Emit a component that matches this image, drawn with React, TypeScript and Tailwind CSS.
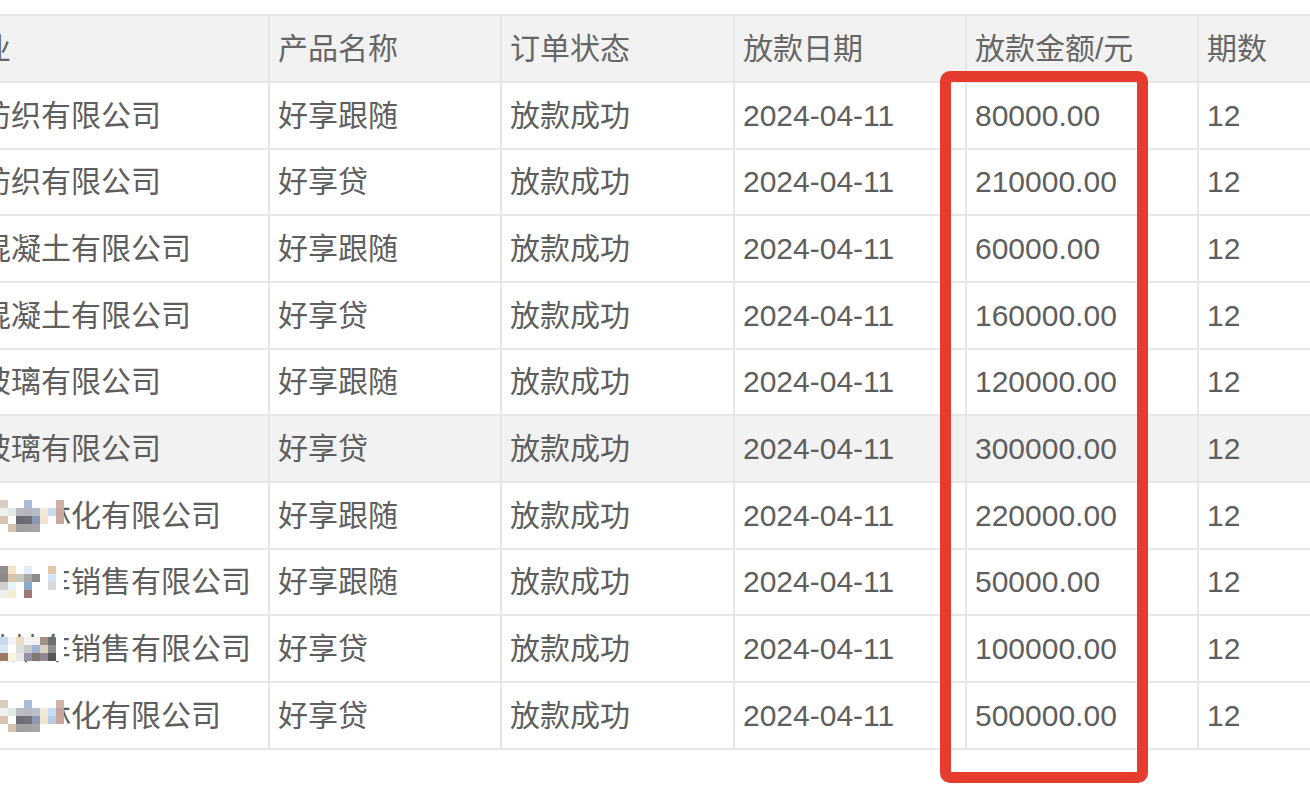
import React from "react";

type Row = { name: string; product: string; amount: string; mosaic?: string[][]; hover?: boolean };

const M7: string[][] = [
  ["#d8cfc4", "#ffffff", "#ffffff", "#a9bbd6", "#ffffff", "#ffffff", "#ffffff", "#d0b0a8"],
  ["#eef2ee", "#e2ebe6", "#b8b8c0", "#b4b4bc", "#b8bcc8", "#f2ead8", "#c8dcf4", "#c8a898"],
  ["#d8c4b0", "#ffffff", "#68686e", "#6c6c74", "#8898b0", "#f0e4d0", "#ffffff", "#c8a8a0"],
  ["#ffffff", "#d4c4b0", "#a0a0a4", "#a2a2a6", "#a4a4a8", "#ffffff", "#ffffff", "#ffffff"],
];
const M8: string[][] = [
  ["#909090", "#f0e4c4", "#ffffff", "#e0ecf8", "#ffffff", "#ffffff", "#e0c8a8", "#ffffff"],
  ["#8a8a8a", "#d8c4a8", "#c8c8c0", "#a8a8a8", "#8c8c8c", "#ffffff", "#d0e4f8", "#ffffff"],
  ["#d0d0d0", "#e8f4fc", "#ffffff", "#88a8d0", "#ffffff", "#ffffff", "#d8d8d8", "#ffffff"],
  ["#eeeeee", "#f4ecd0", "#ffffff", "#a07878", "#ffffff", "#ffffff", "#ffffff", "#ffffff"],
];
const M9: string[][] = [
  ["#c8d8f0", "#f4f4f4", "#e8dcc8", "#f4f4f4", "#f0f0f0", "#a09088", "#707070", "#ffffff"],
  ["#d8e4f0", "#ffffff", "#d8e0d8", "#c8c8c8", "#a0b4d0", "#d8d0c0", "#909090", "#ffffff"],
  ["#a07868", "#f8f4e0", "#e8e8e8", "#9890a8", "#80786c", "#908890", "#585858", "#ffffff"],
];
const M10: string[][] = [
  ["#d6ccc0", "#ffffff", "#ffffff", "#a8bcd8", "#ffffff", "#ffffff", "#ffffff", "#d0b4ac"],
  ["#eef2ee", "#e0eae4", "#bcbcc4", "#b8b8c0", "#bcc0cc", "#f2ead8", "#c8dcf4", "#c4a49c"],
  ["#d8c4b0", "#ffffff", "#6c6c72", "#707078", "#8a9ab0", "#f0e4d0", "#b8cce4", "#c8a8a0"],
  ["#ffffff", "#d4c4b0", "#a0a0a4", "#a2a2a6", "#a6a6aa", "#ffffff", "#ffffff", "#ffffff"],
];

const rows: Row[] = [
  { name: "某某纺织有限公司", product: "好享跟随", amount: "80000.00" },
  { name: "某某纺织有限公司", product: "好享贷", amount: "210000.00" },
  { name: "某某混凝土有限公司", product: "好享跟随", amount: "60000.00" },
  { name: "某某混凝土有限公司", product: "好享贷", amount: "160000.00" },
  { name: "某某玻璃有限公司", product: "好享跟随", amount: "120000.00" },
  { name: "某某玻璃有限公司", product: "好享贷", amount: "300000.00", hover: true },
  { name: "某某某某林化有限公司", product: "好享跟随", amount: "220000.00", mosaic: M7 },
  { name: "某某某某车销售有限公司", product: "好享跟随", amount: "50000.00", mosaic: M8 },
  { name: "某某某某车销售有限公司", product: "好享贷", amount: "100000.00", mosaic: M9 },
  { name: "某某某某林化有限公司", product: "好享贷", amount: "500000.00", mosaic: M10 },
];

const heights = ["h-[67px]", "h-[66px]", "h-[67px]", "h-[67px]", "h-[66px]", "h-[67px]", "h-[67px]", "h-[66px]", "h-[67px]", "h-[67px]"];

const cell = "flex items-center pl-[8px] border-r-2 border-[#e6e6e6] overflow-hidden whitespace-nowrap shrink-0 h-full";
const firstCell = "flex items-center pl-[11px] border-r-2 border-[#e6e6e6] overflow-hidden whitespace-nowrap shrink-0 h-full w-[360px] relative";

function Mosaic({ grid }: { grid: string[][] }) {
  return (
    <div className="absolute left-[90px] top-1/2 -translate-y-1/2 flex flex-col">
      {grid.map((r, i) => (
        <div key={i} className="flex">
          {r.map((c, j) => (
            <div key={j} className="w-[8px] h-[8px]" style={{ backgroundColor: c }} />
          ))}
        </div>
      ))}
    </div>
  );
}

export default function App() {
  return (
    <div
      className="relative w-[1310px] h-[794px] overflow-hidden bg-white text-[30px] leading-none text-[#5e5e5e]"
      style={{ fontFamily: '"Liberation Sans", "Noto Sans CJK SC", sans-serif' }}
    >
      <div className="pt-[14px] ml-[-90px]">
        <div className="border-t-2 border-[#e6e6e6] w-[1600px]">
          <div className="flex h-[67px] bg-[#f2f2f2] border-b-2 border-[#e6e6e6] text-[#666666]">
            <div className={firstCell}>
              <span className="ml-[-30px]">所属企业</span>
            </div>
            <div className={`${cell} w-[232px]`}>产品名称</div>
            <div className={`${cell} w-[233px]`}>订单状态</div>
            <div className={`${cell} w-[232px]`}>放款日期</div>
            <div className={`${cell} w-[232px]`}>放款金额/元</div>
            <div className={`${cell} w-[300px]`}>期数</div>
          </div>
          {rows.map((r, i) => (
            <div
              key={i}
              className={`flex ${heights[i]} border-b-2 border-[#e6e6e6] ${r.hover ? "bg-[#f2f2f2]" : "bg-white"}`}
            >
              <div className={firstCell}>
                {r.name}
                {r.mosaic && <Mosaic grid={r.mosaic} />}
              </div>
              <div className={`${cell} w-[232px]`}>{r.product}</div>
              <div className={`${cell} w-[233px]`}>放款成功</div>
              <div className={`${cell} w-[232px]`}>2024-04-11</div>
              <div className={`${cell} w-[232px]`}>{r.amount}</div>
              <div className={`${cell} w-[300px]`}>12</div>
            </div>
          ))}
        </div>
      </div>
      <div className="absolute left-[940px] top-[71px] w-[208px] h-[712px] border-[11px] border-[#e63c2e] rounded-[10px]" />
    </div>
  );
}
